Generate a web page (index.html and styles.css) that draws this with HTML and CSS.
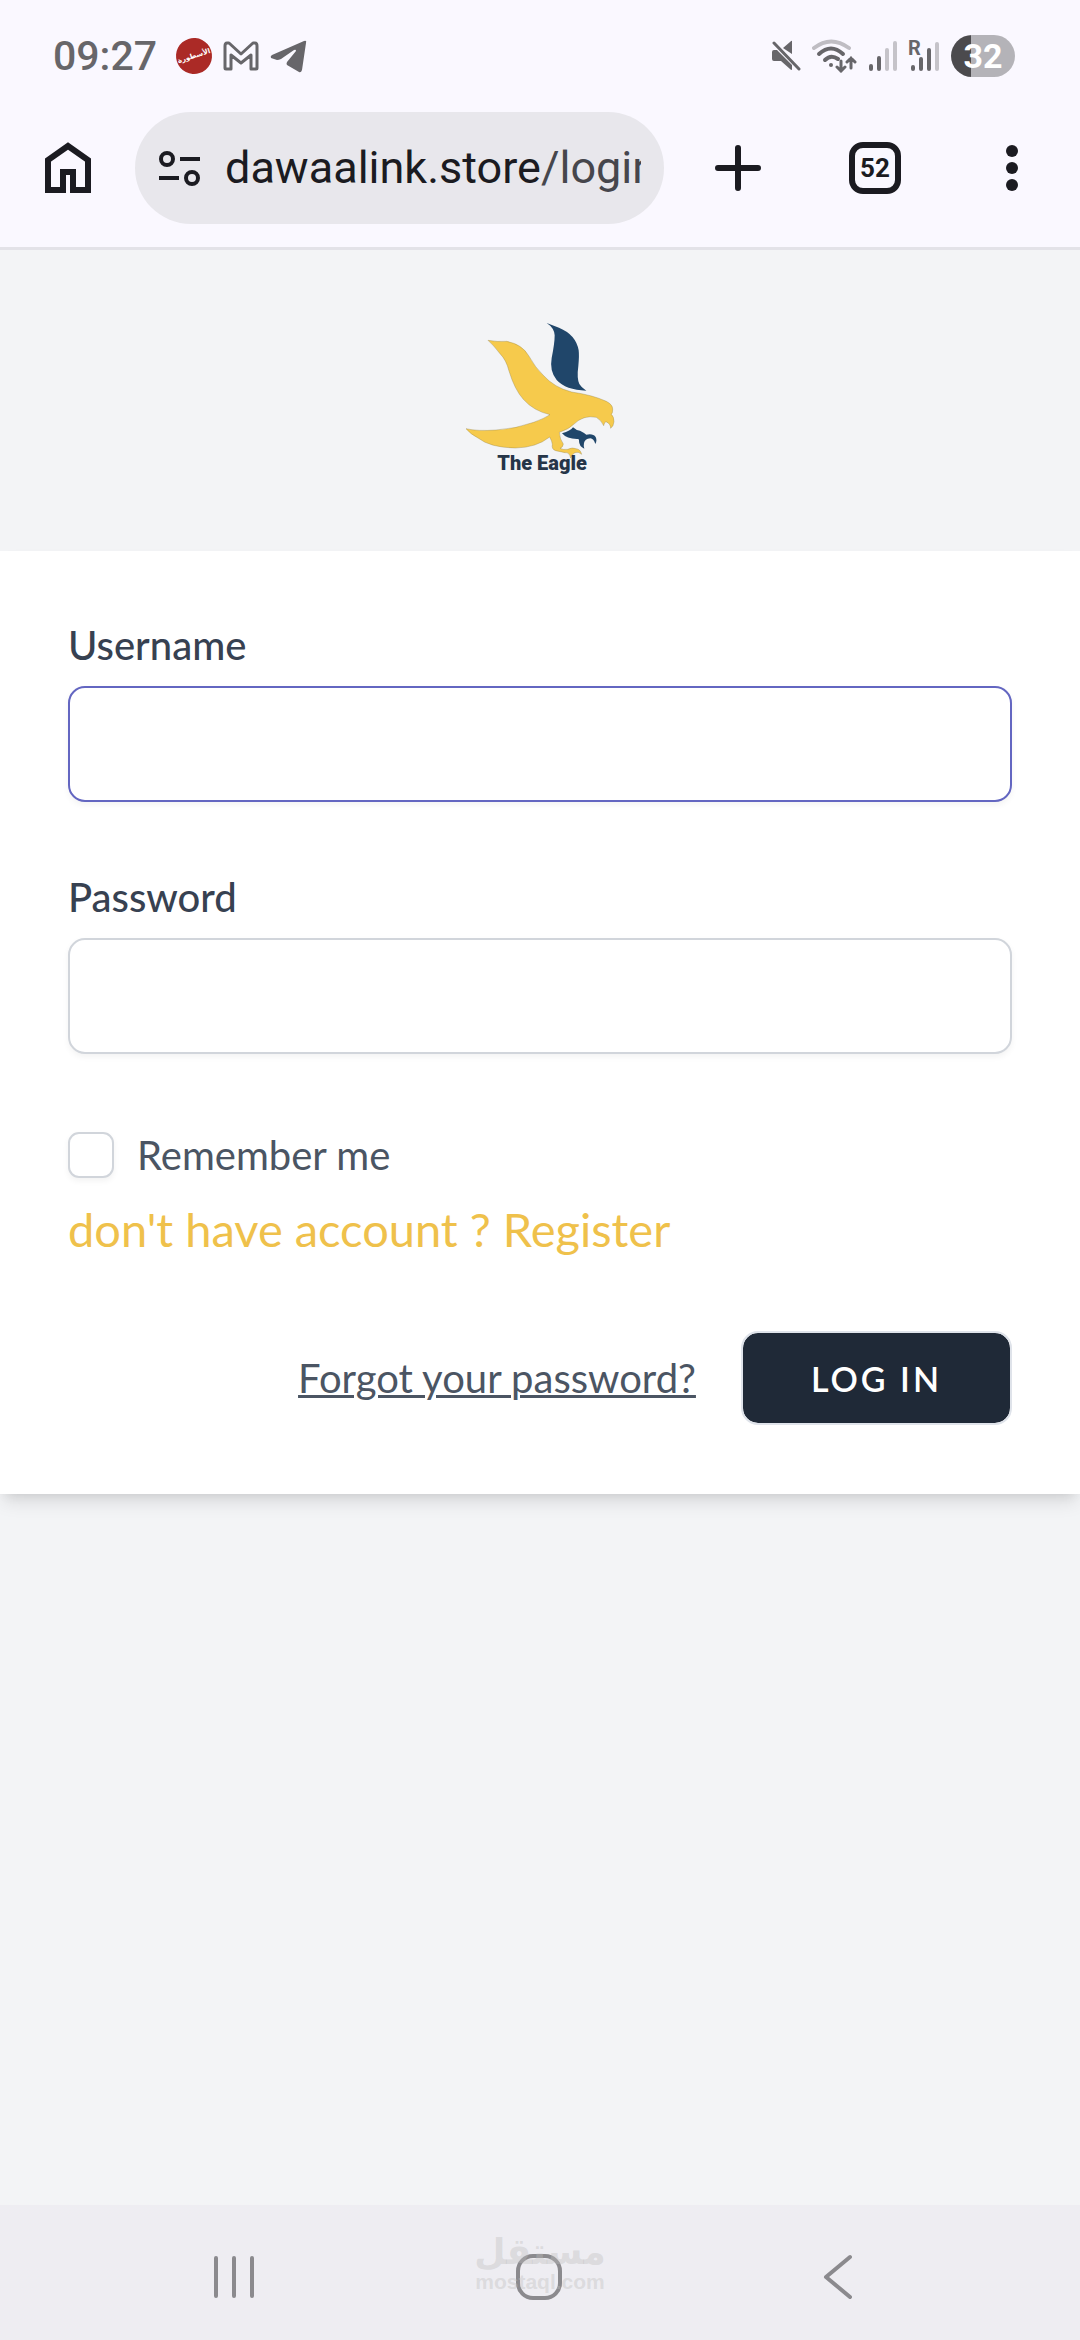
FILE: index.html
```html
<!DOCTYPE html>
<html lang="en">
<head>
    <meta charset="UTF-8">
    <meta name="viewport" content="width=device-width, initial-scale=1.0">
    <title>Log in</title>
    <link rel="stylesheet" href="styles.css">
</head>
<body>

<header class="chrome">
    <div class="status-bar">
        <div class="status-left">
            <span class="clock">09:27</span>
            <span class="app-badge" lang="ar">الأسطورة</span>
            <svg width="36" height="30" viewBox="0 0 36 30" fill="none" stroke="#67666a" stroke-width="3" stroke-linejoin="round">
                <path d="M2 27V5Q2 2 4 2L6 2L18 13L30 2L32 2Q34 2 34 5V27Q34 28 33 28H28V14L18 22L8 14V28H3Q2 28 2 27Z"/>
            </svg>
            <svg width="37" height="33" viewBox="0 0 37 33" fill="#67666a">
                <path d="M2 15L34 1Q37 0 36 3L32 30Q31 33 29 32L17 25Q16 24 17 22L26 11Q26 9 24 10L11 19Q9 20 7 20L1 18Q0 16 2 15Z"/>
            </svg>
        </div>
        <div class="status-right">
            <svg width="30" height="32" viewBox="0 0 30 32" fill="#67666a">
                <path d="M21 1V14L12 8L19 2Q21 0 21 1ZM3 10H6L21 25V29Q21 31 19 29L10 21H3Q1 21 1 19V12Q1 10 3 10Z"/>
                <path d="M3 3L28 29" stroke="#67666a" stroke-width="3" stroke-linecap="round"/>
            </svg>
            <svg width="46" height="34" viewBox="-1 0 46 34" fill="none" stroke="#67666a" stroke-width="3" stroke-linecap="round">
                <path d="M1 9Q18 -4 36 9" stroke="#bfbdc3" stroke-width="4"/>
                <path d="M6 15Q18 4 30 15M12 21Q18 15 25 20" stroke-width="4"/>
                <circle cx="18" cy="26" r="2" fill="#67666a" stroke="none"/>
                <path d="M28 22V32M24 28L28 32L32 28M38 29V19M34 23L38 19L42 23"/>
            </svg>
            <svg width="28" height="30" viewBox="0 0 28 30" stroke-width="4" stroke-linecap="round">
                <path d="M2 25V28M10 17V28" stroke="#67666a"/>
                <path d="M18 9V28M26 2V28" stroke="#c5c3c9"/>
            </svg>
            <svg class="roaming" width="32" height="32" viewBox="0 0 32 32" stroke-width="4" stroke-linecap="round">
                <text class="roaming-text" x="0" y="15">R</text>
                <path d="M5 27V29M13 19V29M21 10V29" stroke="#67666a"/>
                <path d="M29 4V29" stroke="#c5c3c9"/>
            </svg>
            <span class="battery">32</span>
        </div>
    </div>

    <div class="toolbar">
        <button class="tool-button" type="button" aria-label="Home">
            <svg width="46" height="52" viewBox="0 0 46 52" fill="none" stroke="#1b1b21" stroke-width="6">
                <path d="M3 48V18L23 4L43 18V48H28V30H18V48Z"/>
            </svg>
        </button>
        <div class="address">
            <svg width="43" height="37" viewBox="0 0 43 37" fill="none" stroke="#1b1b21" stroke-width="4">
                <circle cx="9" cy="9" r="6"/>
                <circle cx="34" cy="28" r="6"/>
                <path d="M22 9H42M1 28H21"/>
            </svg>
            <div class="url" role="textbox" aria-label="Address">dawaalink.store<span class="url-path">/login</span></div>
        </div>
        <div class="tools">
            <button class="tool-button" type="button" aria-label="New tab">
                <svg width="46" height="48" viewBox="0 0 46 48" stroke="#1b1b21" stroke-width="6" stroke-linecap="round">
                    <path d="M23 4V44M3 24H43"/>
                </svg>
            </button>
            <button class="tool-button tabs" type="button" aria-label="Tabs">52</button>
            <button class="tool-button" type="button" aria-label="Menu">
                <svg width="12" height="48" viewBox="0 0 12 48" fill="#1b1b21">
                    <circle cx="6" cy="7" r="6"/>
                    <circle cx="6" cy="24" r="6"/>
                    <circle cx="6" cy="41" r="6"/>
                </svg>
            </button>
        </div>
    </div>
</header>

<main class="page">
    <a class="logo" href="#" aria-label="The Eagle">
        <svg width="150" height="155" viewBox="75 60 450 465">
            <path fill="#20466a" d="M320 69L357 83Q408 104 416 151Q418 167 415 198Q410 235 418 252Q424 263 439 272Q377 270 350 240Q328 213 335 174Q344 130 344 106Q343 84 320 69Z"/>
            <path fill="#20466a" d="M366 400Q392 393 399 382Q408 391 420 392Q432 398 439 404Q460 400 467 411Q472 422 466 432Q461 416 451 415Q434 417 432 429Q430 438 433 446Q417 439 417 423Q419 418 414 417Q381 418 366 400Z"/>
            <path fill="#f6ca4c" stroke="#8a7a43" d="M144 121Q173 126 200 124Q246 133 266 167Q286 203 309 225Q343 263 395 276Q458 285 499 304Q518 314 518 327Q519 338 514 343Q522 350 522 365Q521 378 512 385Q512 371 498 365Q493 366 491 377Q484 361 469 352Q430 344 401 373Q388 387 358 397Q359 417 370 432Q369 442 360 445Q370 450 383 448Q397 441 408 446Q421 447 425 463Q415 454 405 458Q397 461 392 474Q388 456 375 458L347 452Q334 448 337 433Q336 423 329 411Q289 443 226 444Q151 443 114 414Q91 402 78 386Q112 394 168 390Q226 387 281 367Q314 355 330 344Q281 333 250 298Q224 269 207 213Q199 180 180 161Q160 135 144 121Z"/>
            <text class="logo-text" x="172" y="511">The Eagle</text>
        </svg>
    </a>

    <form class="card">
        <div class="field">
            <label class="field-label" for="username">Username</label>
            <input class="field-input active" id="username" name="username" type="text">
        </div>
        <div class="field">
            <label class="field-label" for="password">Password</label>
            <input class="field-input" id="password" name="password" type="password">
        </div>
        <label class="remember" for="remember">
            <input class="checkbox" id="remember" name="remember" type="checkbox">
            Remember me
        </label>
        <a class="register" href="#">don't have account ? Register</a>
        <div class="actions">
            <a class="forgot" href="#">Forgot your password?</a>
            <button class="login-button" type="submit">Log in</button>
        </div>
    </form>
</main>

<nav class="nav-bar">
    <button class="nav-button" type="button" aria-label="Recent apps">
        <svg width="42" height="46" viewBox="0 0 42 46" stroke="#8b8a8e" stroke-width="4" stroke-linecap="round">
            <path d="M3 4V42M21 4V42M39 4V42"/>
        </svg>
    </button>
    <button class="nav-button" type="button" aria-label="Home screen">
        <svg width="46" height="46" viewBox="0 0 46 46" fill="none" stroke="#8b8a8e" stroke-width="4">
            <rect x="2" y="2" width="42" height="42" rx="15"/>
        </svg>
    </button>
    <button class="nav-button" type="button" aria-label="Back">
        <svg width="30" height="46" viewBox="0 0 30 46" fill="none" stroke="#8b8a8e" stroke-width="4" stroke-linecap="round" stroke-linejoin="round">
            <path d="M27 3L3 23L27 43"/>
        </svg>
    </button>
    <div class="watermark">
        <span class="watermark-ar" lang="ar">مستقل</span>
        <span class="watermark-en">mostaql.com</span>
    </div>
</nav>

</body>
</html>
```
FILE: styles.css
```css
* {
    box-sizing: border-box;
}

body {
    display: flex;
    flex-direction: column;
    min-height: 100vh;
    margin: 0;
    background-color: #f3f4f6;
    font-family: Lato, sans-serif;
    color: #374151;
}

button {
    padding: 0;
    border: 0;
    background: none;
    font-family: inherit;
}

svg {
    display: block;
}

/* Browser header */
.chrome {
    background-color: #faf8ff;
    border-bottom: 3px solid #e3e2e8;
    font-family: Roboto, sans-serif;
}

.status-bar {
    display: flex;
    justify-content: space-between;
    align-items: center;
    height: 112px;
    padding: 0 65px 0 53px;
}

.status-left,
.status-right {
    display: flex;
    align-items: center;
    gap: 11px;
}

.clock {
    margin-right: 8px;
    font-size: 41px;
    font-weight: 500;
    color: #67666a;
}

.app-badge {
    display: flex;
    justify-content: center;
    align-items: center;
    width: 36px;
    height: 36px;
    border-radius: 50%;
    background-color: #ab2a26;
    color: #fff;
    font-family: "DejaVu Sans", sans-serif;
    font-size: 7px;
    font-weight: bold;
    white-space: nowrap;
    transform: rotate(-18deg);
}

.roaming {
    overflow: visible;
}

.roaming-text {
    font-size: 20px;
    font-weight: bold;
    fill: #67666a;
}

.battery {
    width: 64px;
    height: 42px;
    border-radius: 21px;
    background: linear-gradient(to right, #4b4a4d 32%, #b4b3b8 32%);
    color: #fff;
    font-size: 34px;
    font-weight: bold;
    line-height: 42px;
    text-align: center;
}

.toolbar {
    display: flex;
    align-items: center;
    height: 135px;
    padding: 0 42px 23px;
}

.tool-button {
    display: flex;
    justify-content: center;
    align-items: center;
    width: 52px;
    height: 52px;
    color: #1b1b21;
}

.address {
    display: flex;
    flex: 1;
    align-items: center;
    gap: 24px;
    min-width: 0;
    height: 112px;
    margin: 0 48px 0 41px;
    padding: 0 23px;
    border-radius: 56px;
    background-color: #e8e7ec;
}

.url {
    flex: 1;
    overflow: hidden;
    color: #1b1b21;
    font-size: 45px;
    line-height: 60px;
    white-space: nowrap;
}

.url-path {
    color: #46464c;
}

.tools {
    display: flex;
    align-items: center;
    gap: 85px;
}

.tabs {
    border: 6px solid #1b1b21;
    border-radius: 14px;
    font-size: 26px;
    font-weight: bold;
}

/* Login page */
.page {
    flex: 1;
}

.logo {
    display: flex;
    justify-content: center;
    padding: 70px 0 76px;
}

.logo-text {
    fill: #253548;
    font-family: Roboto, sans-serif;
    font-size: 60px;
    font-weight: 900;
}

.card {
    display: flex;
    flex-direction: column;
    align-items: flex-start;
    padding: 66px 68px 69px;
    background-color: #fff;
    box-shadow: 0 11px 17px -3px rgba(0, 0, 0, 0.1), 0 6px 11px -6px rgba(0, 0, 0, 0.1);
}

.field {
    width: 100%;
    margin-bottom: 67px;
}

.field-label {
    display: block;
    margin-bottom: 13px;
    font-size: 40px;
    font-weight: 500;
    line-height: 56px;
}

.field-input {
    display: block;
    width: 100%;
    height: 116px;
    padding: 0 32px;
    border: 2px solid #d1d5db;
    border-radius: 17px;
    outline: none;
    background-color: #fff;
    box-shadow: 0 3px 6px rgba(0, 0, 0, 0.05);
    font-family: inherit;
    font-size: 47px;
}

.field-input.active,
.field-input:focus {
    border-color: #6366c1;
}

.remember {
    display: flex;
    align-items: center;
    gap: 23px;
    margin-top: 6px;
    color: #4b5563;
    font-size: 40px;
    line-height: 56px;
}

.checkbox {
    width: 46px;
    height: 46px;
    margin: 0;
    border: 2px solid #d1d5db;
    border-radius: 11px;
    appearance: none;
    background-color: #fff;
    box-shadow: 0 3px 6px rgba(0, 0, 0, 0.05);
}

.checkbox:checked {
    background-color: #4f46e5;
}

.register {
    margin: 12px 0 68px;
    color: #efc14b;
    font-size: 47px;
    line-height: 68px;
    text-decoration: none;
}

.actions {
    display: flex;
    justify-content: flex-end;
    align-items: center;
    gap: 45px;
    width: 100%;
}

.forgot {
    color: #4b5563;
    font-size: 40px;
    line-height: 56px;
    text-decoration-thickness: 3px;
}

.login-button {
    height: 94px;
    padding: 0 68px;
    border: 2px solid #dfe3ea;
    border-radius: 17px;
    background-color: #1f2937;
    background-clip: padding-box;
    color: #fff;
    font-size: 34px;
    font-weight: 600;
    letter-spacing: 3px;
    text-transform: uppercase;
}

/* System navigation */
.nav-bar {
    display: flex;
    position: relative;
    justify-content: space-between;
    align-items: center;
    height: 135px;
    padding: 8px 227px 0 213px;
    background-color: #eeedf2;
}

.watermark {
    display: flex;
    position: absolute;
    top: 28px;
    left: 50%;
    flex-direction: column;
    align-items: center;
    color: rgba(190, 190, 190, 0.4);
    font-weight: bold;
    transform: translateX(-50%);
    pointer-events: none;
}

.watermark-ar {
    font-family: "DejaVu Sans", sans-serif;
    font-size: 36px;
    line-height: 38px;
}

.watermark-en {
    font-family: "Liberation Sans", sans-serif;
    font-size: 21px;
    line-height: 22px;
}
```
